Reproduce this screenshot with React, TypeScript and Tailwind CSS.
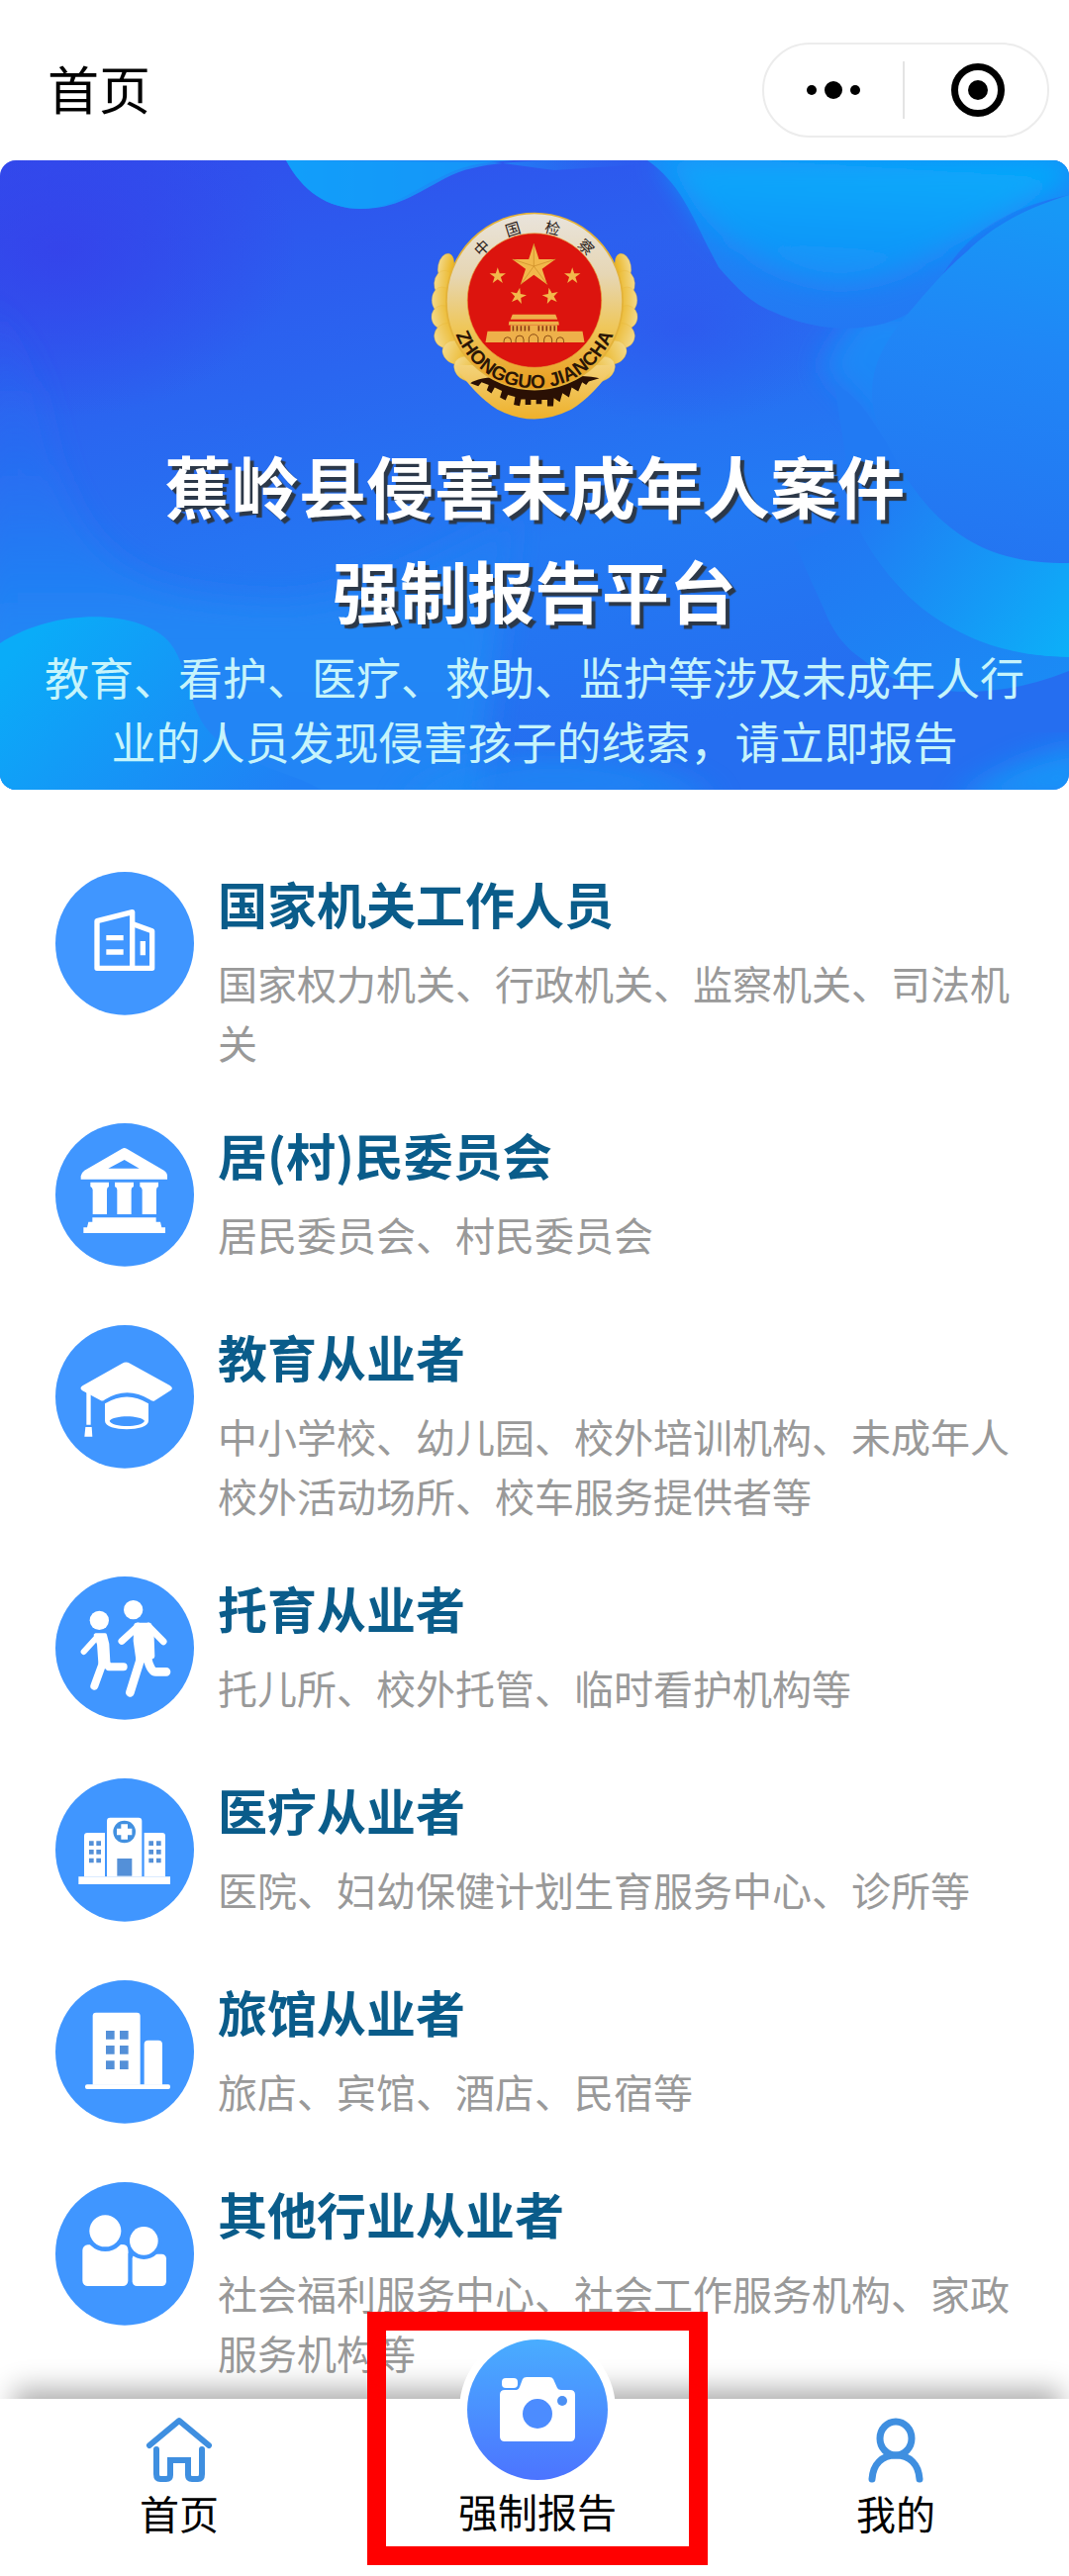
import type { ReactNode } from 'react';

type Category = {
  id: string;
  title: string;
  desc: string;
  icon: ReactNode;
};

const windowColor = '#5490d8';

const OfficeIcon = (
  <g fill="none" stroke="#fff" strokeWidth="16" strokeLinejoin="round" strokeLinecap="round">
    <path d="M126 149 233 122V292H126Z" />
    <path d="M235 158 293 179V292H235" />
    <path d="M154 200H206M154 243H206M265 210V253" strokeLinecap="butt" />
  </g>
);

const CommitteeIcon = (
  <g fill="#fff">
    <path
      fillRule="evenodd"
      d="M202 77Q209 73 216 77L329 143Q339 150 339 160V170H77V160Q78 150 88 143ZM209 111 160 137H254Z"
    />
    <path d="M106 179H162V192Q156 194 156 202V276H113V202Q112 194 106 192Z" />
    <path d="M180 179H237V192Q230 194 230 202V276H187V202Q187 194 180 192Z" />
    <path d="M256 179H312V192Q306 194 306 202V276H263V202Q262 194 256 192Z" />
    <path d="M112 286H305V299H318L322 316H333V333H85V316H96L100 299H112Z" />
  </g>
);

const EducationIcon = (
  <g fill="#fff">
    <path d="M202 116Q214 109 226 116L347 183Q360 192 348 199L299 230Q291 231 286 226 217 184 150 226 145 231 138 229L82 199Q71 192 82 184Z" />
    <path
      fillRule="evenodd"
      d="M150 238Q217 197 282 238V290C282 324 150 324 150 290ZM164 290C170 311 264 311 270 290 258 272 176 272 164 290Z"
    />
    <path d="M94 200H107V302H94ZM91 309H110L112 338H88Z" />
  </g>
);

const ChildcareIcon = (
  <g fill="#fff" stroke="#fff" strokeLinecap="round" strokeLinejoin="round">
    <circle cx="133" cy="133" r="29" stroke="none" />
    <circle cx="236" cy="101" r="29" stroke="none" />
    <path d="M122 178H150L157 205 160 258 136 262 132 205Z" strokeWidth="12" />
    <path d="M86 228 126 184" fill="none" strokeWidth="18" />
    <path d="M145 258 118 332M150 258 162 274H206" fill="none" strokeWidth="24" />
    <path d="M246 148H284L291 185 293 242 252 252 244 195Z" strokeWidth="16" />
    <path d="M201 196 250 151M282 151 327 197" fill="none" strokeWidth="21" />
    <path d="M258 250 226 352M278 245Q288 289 304 289H336" fill="none" strokeWidth="26" />
  </g>
);

const HospitalIcon = (
  <g fill="#fff">
    <path d="M70 298H348V321H70Z" />
    <path d="M87 298V175Q87 165 97 165H150V298ZM269 298V165H323Q333 165 333 175V298Z" />
    <path d="M156 298V129Q156 119 166 119H252Q262 119 262 129V298Z" />
    <circle cx="209" cy="162" r="34" fill="#4290e0" />
    <path d="M209 139V185M186 162H232" fill="none" stroke="#fff" strokeWidth="20" />
    <path d="M187 243H232V296H187Z" fill={windowColor} />
    <path
      fill={windowColor}
      d="M102 190h14v14h-14zM124 190h14v14h-14zM102 216h14v14h-14zM124 216h14v14h-14zM102 242h14v14h-14zM124 242h14v14h-14zM283 190h14v14h-14zM306 190h14v14h-14zM283 216h14v14h-14zM306 216h14v14h-14zM283 242h14v14h-14zM306 242h14v14h-14z"
    />
  </g>
);

const HotelIcon = (
  <g fill="#fff">
    <path d="M113 317V108Q113 98 123 98H247Q257 98 257 108V317Z" />
    <path d="M269 317V194Q269 182 281 182H312Q324 182 324 194V317Z" />
    <rect x="90" y="316" width="258" height="14" rx="6" />
    <path
      fill={windowColor}
      d="M153 153h26v26h-26zM195 153h26v26h-26zM153 198h26v26h-26zM195 198h26v26h-26zM153 244h26v26h-26zM195 244h26v26h-26z"
    />
  </g>
);

const PeopleIcon = (
  <g fill="#fff">
    <rect x="82" y="190" width="138" height="125" rx="16" />
    <rect x="233" y="218" width="103" height="97" rx="14" />
    <circle cx="151" cy="148" r="62" fill="#4096ff" />
    <circle cx="268" cy="178" r="56" fill="#4096ff" />
    <circle cx="151" cy="148" r="48" />
    <circle cx="268" cy="178" r="43" />
    <path d="M198 190H204Q220 190 220 206V216H190Z" />
  </g>
);

const categories: Category[] = [
  {
    id: 'office',
    title: '国家机关工作人员',
    desc: '国家权力机关、行政机关、监察机关、司法机关',
    icon: OfficeIcon,
  },
  { id: 'committee', title: '居(村)民委员会', desc: '居民委员会、村民委员会', icon: CommitteeIcon },
  {
    id: 'education',
    title: '教育从业者',
    desc: '中小学校、幼儿园、校外培训机构、未成年人校外活动场所、校车服务提供者等',
    icon: EducationIcon,
  },
  {
    id: 'childcare',
    title: '托育从业者',
    desc: '托儿所、校外托管、临时看护机构等',
    icon: ChildcareIcon,
  },
  {
    id: 'medical',
    title: '医疗从业者',
    desc: '医院、妇幼保健计划生育服务中心、诊所等',
    icon: HospitalIcon,
  },
  { id: 'hotel', title: '旅馆从业者', desc: '旅店、宾馆、酒店、民宿等', icon: HotelIcon },
  {
    id: 'other',
    title: '其他行业从业者',
    desc: '社会福利服务中心、社会工作服务机构、家政服务机构等',
    icon: PeopleIcon,
  },
];

const emblemChars = [
  { char: '中', angle: -45 },
  { char: '国', angle: -17 },
  { char: '检', angle: 14 },
  { char: '察', angle: 44 },
];

const STAR =
  'M0 -1 .2245 -.309 .9511 -.309 .3633 .118 .5878 .809 0 .382 -.5878 .809 -.3633 .118 -.9511 -.309 -.2245 -.309Z';

// Wheat lobes on the left side, mirrored for the right
const lobes = [
  { cx: 164, cy: 210, rx: 24, ry: 40, rot: 12 },
  { cx: 158, cy: 262, rx: 30, ry: 40, rot: 4 },
  { cx: 152, cy: 312, rx: 31, ry: 40, rot: 0 },
  { cx: 154, cy: 364, rx: 34, ry: 36, rot: -10 },
  { cx: 168, cy: 420, rx: 40, ry: 38, rot: -20 },
  { cx: 198, cy: 472, rx: 46, ry: 36, rot: 20 },
  { cx: 232, cy: 522, rx: 46, ry: 36, rot: 30 },
];

function Emblem() {
  return (
    <svg viewBox="117 38 632 640" className="h-[213px] w-[210px]" role="img" aria-label="中国检察">
      <defs>
        <linearGradient id="rim" x1="0" y1="0" x2="0" y2="1">
          <stop offset="0" stopColor="#e9e4dc" />
          <stop offset="0.35" stopColor="#e6d6b4" />
          <stop offset="0.65" stopColor="#efc75a" />
          <stop offset="1" stopColor="#e89a1c" />
        </linearGradient>
        <linearGradient id="wheat" x1="0" y1="0" x2="1" y2="0">
          <stop offset="0" stopColor="#f3d98a" />
          <stop offset="1" stopColor="#eab31c" />
        </linearGradient>
        <linearGradient id="base" x1="0" y1="0" x2="0" y2="1">
          <stop offset="0" stopColor="#f3d27a" />
          <stop offset="1" stopColor="#eeb02a" />
        </linearGradient>
        <path id="pinyin" d="M176 323A257 257 0 0 0 690 323" />
      </defs>
      {[false, true].map((flip) => (
        <g key={String(flip)} transform={flip ? 'translate(866 0) scale(-1 1)' : undefined}>
          {lobes.map((l) => (
            <ellipse
              key={l.cy}
              cx={l.cx}
              cy={l.cy}
              rx={l.rx}
              ry={l.ry}
              transform={`rotate(${l.rot} ${l.cx} ${l.cy})`}
              fill="url(#wheat)"
              stroke="#e6b436"
              strokeWidth="1"
            />
          ))}
        </g>
      ))}
      <path d="M190 510Q250 600 320 645 380 674 433 674 486 674 545 645 616 600 676 510Z" fill="url(#base)" />
      <path d="M238 565Q268 540 433 540 598 540 630 550L598 560 590 570 578 562 566 590 546 578 538 608 518 595 510 622 492 610 490 635H472V615H455V628H438V615H422V630H405V614H392L388 634 370 630 374 606 352 600 345 617 328 608 334 588 312 578 302 596 288 586 294 570 272 562 262 574Z" fill="#2a1004" />
      <circle cx="433" cy="316" r="268" fill="url(#rim)" stroke="#e3b23a" strokeWidth="5" />
      <circle cx="433" cy="313" r="204" fill="#dc140e" stroke="#e9a63a" strokeWidth="2" />
      <g fill="#f2b84b">
        <path d={STAR} transform="translate(431 209) scale(69)" />
        <path d={STAR} transform="translate(321 239) scale(26)" />
        <path d={STAR} transform="translate(548 239) scale(26)" />
        <path d={STAR} transform="translate(383 300) scale(26) rotate(12)" />
        <path d={STAR} transform="translate(482 300) scale(26) rotate(-12)" />
      </g>
      <path
        d="M431 140V209L366 188M431 209 391 265M431 209 472 265M431 209 497 188"
        fill="none"
        stroke="#c98a24"
        strokeWidth="2"
      />
      <g fill="#eeb04a">
        <path d="M366 356H497L503 371H360ZM356 377H506L508 388H354Z" />
        <path d="M360 388H502V407H360ZM290 407H579L585 441H284Z" />
      </g>
      <path
        d="M368 390V406M380 390V406M392 390V406M404 390V406M416 390V406M446 390V406M458 390V406M470 390V406M482 390V406M494 390V406"
        stroke="#8a3a12"
        strokeWidth="5"
      />
      <path
        d="M340 442V436A11 11 0 0 1 362 436V442M376 442V432A12 12 0 0 1 400 432V442M416 442V430A14 14 0 0 1 444 430V442M462 442V432A12 12 0 0 1 486 432V442M500 442V436A11 11 0 0 1 522 436V442"
        fill="none"
        stroke="#8a4a14"
        strokeWidth="3"
      />
      <g fill="#2b211a" fontSize="46" textAnchor="middle" fontFamily="'Noto Sans CJK SC', sans-serif">
        {emblemChars.map(({ char, angle }) => (
          <text key={char} x="433" y="104" transform={`rotate(${angle} 433 313)`}>
            {char}
          </text>
        ))}
      </g>
      <text
        fill="#2a1606"
        fontSize="58"
        fontWeight="700"
        fontFamily="'Liberation Sans', Arial, sans-serif"
      >
        <textPath href="#pinyin" startOffset="50%" textAnchor="middle">
          ZHONGGUO JIANCHA
        </textPath>
      </text>
    </svg>
  );
}

function BannerBackground() {
  return (
    <svg
      viewBox="0 0 1080 636"
      preserveAspectRatio="none"
      className="absolute inset-0 h-full w-full"
      aria-hidden="true"
    >
      <defs>
        <linearGradient id="sky" x1="0" y1="0" x2="0.4" y2="1">
          <stop offset="0" stopColor="#304cec" />
          <stop offset="0.4" stopColor="#2a66f0" />
          <stop offset="0.7" stopColor="#237af3" />
          <stop offset="1" stopColor="#256ef0" />
        </linearGradient>
        <linearGradient id="topWave" x1="0" y1="0" x2="1" y2="0">
          <stop offset="0" stopColor="#0fa2fb" />
          <stop offset="0.55" stopColor="#1e86f6" />
          <stop offset="1" stopColor="#2a70f1" stopOpacity="0" />
        </linearGradient>
        <linearGradient id="rightOuter" x1="0.5" y1="0" x2="0.5" y2="1">
          <stop offset="0" stopColor="#1a8cf8" />
          <stop offset="1" stopColor="#2378f3" />
        </linearGradient>
        <linearGradient id="rightInner" x1="0.7" y1="0" x2="0.5" y2="1">
          <stop offset="0" stopColor="#05acfb" />
          <stop offset="1" stopColor="#1690f8" />
        </linearGradient>
        <linearGradient id="rightSide" x1="0.5" y1="0" x2="0.4" y2="1">
          <stop offset="0" stopColor="#1798f6" />
          <stop offset="0.4" stopColor="#2086f6" />
          <stop offset="1" stopColor="#2474f1" />
        </linearGradient>
        <linearGradient id="leftWave" x1="0" y1="0.3" x2="1" y2="0.8">
          <stop offset="0" stopColor="#0aacf8" />
          <stop offset="1" stopColor="#2080f5" />
        </linearGradient>
        <linearGradient id="midWave" x1="0" y1="0" x2="0" y2="1">
          <stop offset="0" stopColor="#2a60f0" stopOpacity="0" />
          <stop offset="0.65" stopColor="#2086f5" />
          <stop offset="1" stopColor="#2084f5" />
        </linearGradient>
        <linearGradient id="crescent" x1="0" y1="0.2" x2="1" y2="1">
          <stop offset="0.2" stopColor="#217af3" />
          <stop offset="1" stopColor="#0cb0f8" />
        </linearGradient>
        <linearGradient id="lowerCrescent" x1="0" y1="0" x2="1" y2="1">
          <stop offset="0" stopColor="#2276f2" />
          <stop offset="1" stopColor="#1a8cf5" />
        </linearGradient>
        <radialGradient id="dark" cx="0.5" cy="0.5" r="0.5">
          <stop offset="0" stopColor="#3640ea" />
          <stop offset="1" stopColor="#3640ea" stopOpacity="0" />
        </radialGradient>
        <filter id="soft" x="-20%" y="-20%" width="140%" height="140%">
          <feGaussianBlur stdDeviation="14" />
        </filter>
      </defs>
      <rect width="1080" height="636" fill="url(#sky)" />
      <ellipse cx="60" cy="90" rx="240" ry="170" fill="url(#dark)" opacity="0.8" />
      <ellipse cx="690" cy="170" rx="160" ry="100" fill="url(#dark)" opacity="0.35" />
      <path d="M-20 130C50 190 40 270 70 340 110 430 190 446 296 446 400 430 430 400 520 360L480 660H-20Z" fill="url(#midWave)" filter="url(#soft)" />
      <path d="M829 210C860 235 880 262 895 284 940 350 990 405 1080 406V150H870Z" fill="url(#rightOuter)" filter="url(#soft)" />
      <path d="M289 0C305 30 330 49 365 49 400 49 420 34 450 18 475 4 510 2 551 0H650V4L560 10 500 2Z" fill="url(#topWave)" />
      <path d="M289 0C305 30 330 49 365 49 410 49 440 6 496 2L520 0Z" fill="#129cfa" opacity="0.7" />
      <path d="M654 0C690 25 700 60 726 108 745 130 760 145 781 153 830 176 890 176 926 149 960 120 960 60 1080 35V0Z" fill="url(#rightOuter)" />
      <path d="M664 0C690 18 695 38 709 55 725 75 740 86 760 96 785 112 820 124 850 124 910 122 960 90 1080 20V0Z" fill="url(#rightInner)" filter="url(#soft)" />
      <path d="M1080 35C1030 50 1000 70 977 92 950 115 935 135 912 161 880 200 870 240 895 284 910 315 930 345 953 365 975 385 1000 398 1030 404L1080 407Z" fill="url(#rightSide)" />
      <path d="M843 225C870 240 880 262 895 284 910 315 930 345 953 365 990 398 1030 407 1080 407V502C1040 502 1000 494 970 480 945 468 930 455 912 435 890 412 875 390 864 365Z" fill="url(#crescent)" />
      <path d="M802 386 864 365C875 390 890 412 912 435 945 468 1000 502 1080 502V516C1030 536 980 542 936 533 910 528 890 520 871 504 850 490 840 472 833 455Z" fill="url(#lowerCrescent)" />
      <path d="M0 488C60 450 145 455 172 488 196 520 185 560 225 590 260 615 300 620 324 636H0Z" fill="url(#leftWave)" />
      <path d="M400 650C480 580 660 590 730 650Z" fill="#1a8cf6" opacity="0.7" filter="url(#soft)" />
      <path d="M960 650C1000 620 1040 600 1100 590V650Z" fill="#129cfa" opacity="0.8" filter="url(#soft)" />
    </svg>
  );
}

function TopBar() {
  return (
    <header className="flex h-[162px] items-center justify-between pt-5 pr-5 pl-12">
      <h1 className="pb-1 text-[52px] leading-[60px]">首页</h1>
      <div className="flex h-24 w-[290px] items-center rounded-full border-2 border-[#ececec]">
        <button type="button" aria-label="更多" className="flex flex-1 items-center justify-center gap-2">
          <span className="size-[10px] rounded-full bg-black" />
          <span className="size-[18px] rounded-full bg-black" />
          <span className="size-[10px] rounded-full bg-black" />
        </button>
        <span className="h-[58px] w-0.5 bg-[#e4e4e4]" />
        <button type="button" aria-label="关闭" className="flex flex-1 items-center justify-center pl-1">
          <span className="flex size-[54px] items-center justify-center rounded-full border-[7px] border-black">
            <span className="size-5 rounded-full bg-black" />
          </span>
        </button>
      </div>
    </header>
  );
}

function Banner() {
  return (
    <section className="relative overflow-hidden rounded-2xl">
      <BannerBackground />
      <div className="relative flex flex-col items-center px-[27px] pt-[50px] pb-[17px] text-center">
        <Emblem />
        <h2 className="mt-3 text-[68px] leading-[106px] font-bold text-white [text-shadow:4px_4px_1px_#2c3848]">
          蕉岭县侵害未成年人案件
          <br />
          强制报告平台
        </h2>
        <p className="mt-0.5 text-[45px] leading-[65px] text-[#c6f4fb]">
          教育、看护、医疗、救助、监护等涉及未成年人行业的人员发现侵害孩子的线索，请立即报告
        </p>
      </div>
    </section>
  );
}

function CategoryRow({ title, desc, icon }: Category) {
  return (
    <li>
      <a href="#report" className="flex min-h-[154px] items-start gap-6">
        <svg viewBox="0 0 420 435" className="h-[145px] w-[140px] shrink-0" aria-hidden="true">
          <ellipse cx="210" cy="217" rx="210" ry="217" fill="#4096ff" />
          {icon}
        </svg>
        <div className="flex-1 pb-0.5">
          <h3 className="text-[50px] leading-[62px] font-bold text-[#0a5c8a]">{title}</h3>
          <p className="mt-5 text-[40px] leading-[60px] text-[#999]">{desc}</p>
        </div>
      </a>
    </li>
  );
}

function HomeIcon() {
  return (
    <svg viewBox="0 0 70 70" className="size-[70px]" fill="none" stroke="#3f8fe0" strokeWidth="6" aria-hidden="true">
      <path d="M5 31 35 6 65 31" strokeLinecap="round" strokeLinejoin="round" />
      <path d="M12 35V60Q12 65 16 65H22Q26 65 26 61V46H44V61Q44 65 48 65H54Q58 65 58 60V35" strokeLinecap="round" />
    </svg>
  );
}

function UserIcon() {
  return (
    <svg viewBox="0 0 70 70" className="size-[70px]" fill="none" stroke="#3f8fe0" strokeWidth="7" aria-hidden="true">
      <ellipse cx="35" cy="24" rx="16" ry="17" />
      <path d="M11 65C12 50 21 41 35 41 49 41 58 50 59 65" strokeLinecap="round" />
    </svg>
  );
}

function CameraIcon() {
  return (
    <svg viewBox="0 0 142 142" className="size-[142px]" aria-hidden="true">
      <defs>
        <linearGradient id="camera" x1="0" y1="0" x2="0" y2="1">
          <stop offset="0" stopColor="#49adff" />
          <stop offset="1" stopColor="#4c74ff" />
        </linearGradient>
      </defs>
      <circle cx="71" cy="71" r="71" fill="url(#camera)" />
      <g fill="#fff">
        <rect x="35" y="39" width="16" height="10" rx="4" />
        <path d="M38 51H50Q52 51 53 48L56 40Q57 38 60 38H83Q86 38 87 40L91 49Q92 51 95 51H104Q109 51 109 56V98Q109 103 104 103H38Q33 103 33 98V56Q33 51 38 51Z" />
      </g>
      <circle cx="71" cy="75" r="15" fill="#4c8cff" />
      <circle cx="96" cy="62" r="5" fill="#4c90f4" />
    </svg>
  );
}

function TabBar() {
  return (
    <nav className="sticky bottom-0 -mr-1.5 grid h-[180px] grid-cols-3 bg-white text-[40px] leading-[50px] shadow-[0_-24px_26px_-14px_rgba(0,0,0,0.32)]">
      <a href="#home" className="flex flex-col items-center justify-end pb-10">
        <HomeIcon />
        <span className="mt-1">首页</span>
      </a>
      <a href="#report" className="relative flex flex-col items-center justify-end pb-[42px]">
        <span className="-mt-[68px] -mb-0.5 rounded-full border-8 border-white bg-white">
          <CameraIcon />
        </span>
        <span>强制报告</span>
        <span className="absolute -top-[88px] bottom-3 w-[344px] border-[19px] border-[#ff0000]" />
      </a>
      <a href="#mine" className="flex flex-col items-center justify-end pb-10">
        <UserIcon />
        <span className="mt-1">我的</span>
      </a>
    </nav>
  );
}

export default function App() {
  return (
    <div className="min-h-screen overflow-x-clip bg-white font-['Noto_Sans_CJK_SC',sans-serif] text-black">
      <TopBar />
      <main>
        <Banner />
        <ul className="flex flex-col gap-[50px] px-14 pt-[83px] pb-[15px]">
          {categories.map((category) => (
            <CategoryRow key={category.id} {...category} />
          ))}
        </ul>
      </main>
      <TabBar />
    </div>
  );
}
